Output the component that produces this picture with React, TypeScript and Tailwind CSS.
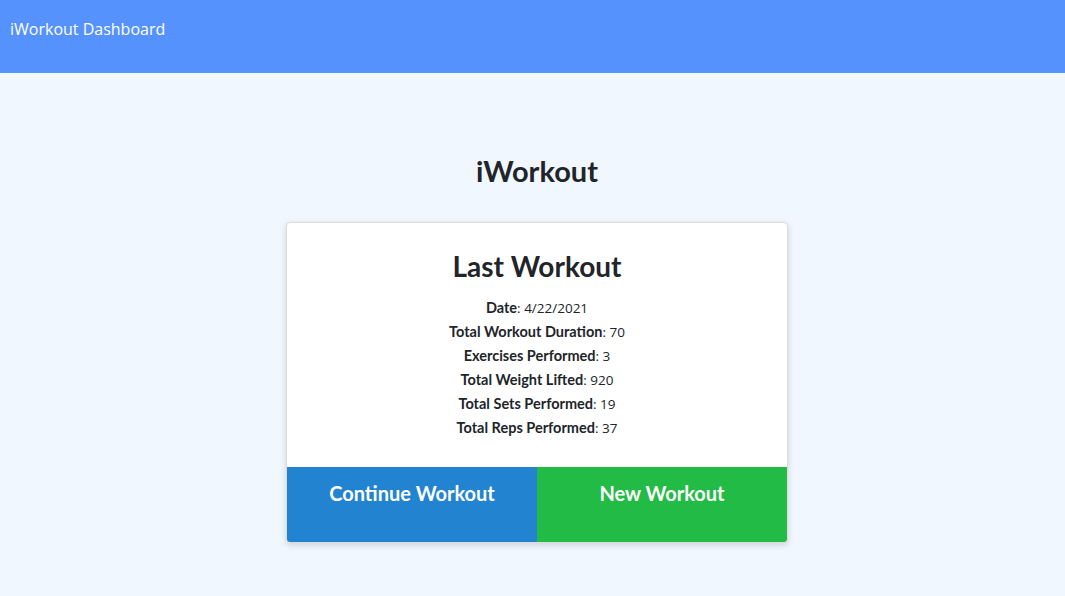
const stats = [
  { label: "Date", value: "4/22/2021" },
  { label: "Total Workout Duration", value: "70" },
  { label: "Exercises Performed", value: "3" },
  { label: "Total Weight Lifted", value: "920" },
  { label: "Total Sets Performed", value: "19" },
  { label: "Total Reps Performed", value: "37" },
];

const App = () => {
  return (
    <div className="min-h-[596px] bg-[#f0f7ff] font-['Open_Sans',sans-serif]">
      <header className="h-[73px] bg-[#5592fd] px-[10px] pt-[17px]">
        <span className="text-[16px] leading-[22px] text-white">iWorkout Dashboard</span>
      </header>

      <main className="flex flex-col items-center pt-[79px] pl-[9px]">
        <h1 className="font-['Lato',sans-serif] text-[29px] font-bold leading-[38px] text-[#212529]">
          iWorkout
        </h1>

        <div className="mt-[32px] w-[502px] overflow-hidden rounded-[4px] border border-[#dcdcdc] bg-white shadow-[0_2px_6px_rgba(0,0,0,0.15)]">
          <div className="flex flex-col items-center pt-[21px] pb-[27px]">
            <h2 className="font-['Lato',sans-serif] text-[28px] font-bold leading-[44px] text-[#212529]">
              Last Workout
            </h2>
            <ul className="mt-[8px] flex flex-col items-center text-[13.5px] leading-[24px] text-[#212529]">
              {stats.map((s) => (
                <li key={s.label}>
                  <span className="font-['Lato',sans-serif] text-[14.5px] font-bold">{s.label}</span>: {s.value}
                </li>
              ))}
            </ul>
          </div>
          <div className="grid grid-cols-2 font-['Lato',sans-serif] text-[20px] font-bold text-white">
            <button className="h-[75px] bg-[#2284d0] pb-[24px]">Continue Workout</button>
            <button className="h-[75px] bg-[#22bb45] pb-[24px]">New Workout</button>
          </div>
        </div>
      </main>
    </div>
  );
};

export default App;
